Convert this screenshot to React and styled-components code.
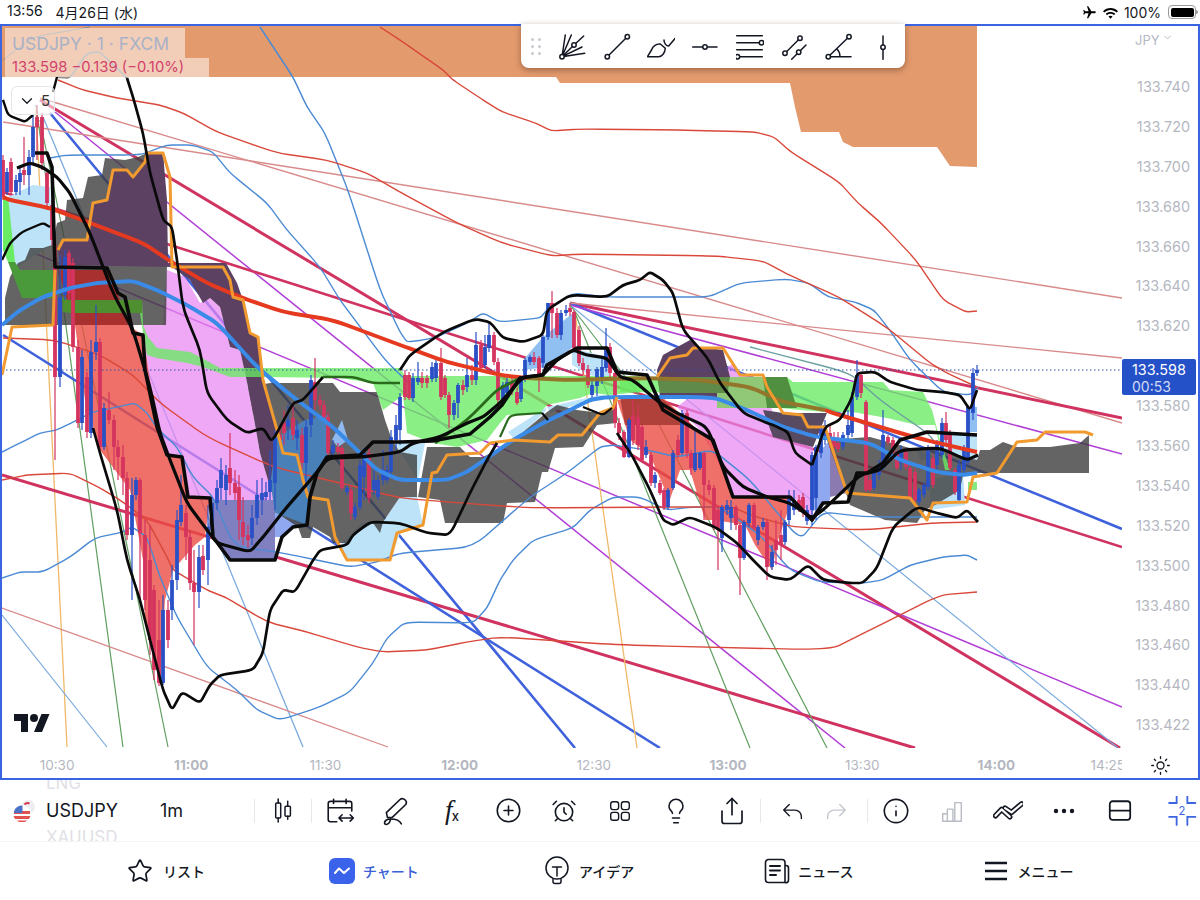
import React from "react";
import styled, { createGlobalStyle } from "styled-components";
import { Sun, CirclePlus, AlarmClock, Lightbulb, Share, Info, Star, ChevronDown } from "lucide-react";

const Global = createGlobalStyle`
  html, body { margin: 0; padding: 0; background: #fff; }
  body { font-family: Inter, "Noto Sans CJK JP", sans-serif; color: #131722; overflow: hidden; }
  * { box-sizing: border-box; }
`;

const Page = styled.div`
  width: 1200px; height: 900px; display: flex; flex-direction: column; background: #fff; overflow: hidden;
`;
const StatusBar = styled.div`
  height: 24px; flex: none; display: flex; align-items: center; justify-content: space-between; padding: 0 4px 0 7px;
  font-size: 14px; font-family: Inter, "Noto Sans CJK JP", sans-serif;
`;
const StatusLeft = styled.div`display: flex; gap: 13px; white-space: nowrap; font-weight: 400;`;
const StatusRight = styled.div`display: flex; align-items: center; gap: 5px; font-size: 14px;`;
const BatteryShell = styled.div`
  width: 28px; height: 14px; border: 1px solid #9a9a9a; border-radius: 4px; padding: 1.5px; margin-left: 2px; position: relative;
  &::after { content: ""; position: absolute; right: -3px; top: 4px; width: 2px; height: 4px; border-radius: 0 2px 2px 0; background: #9a9a9a; }
`;
const BatteryFill = styled.div`width: 100%; height: 100%; background: #000; border-radius: 2px;`;

const Frame = styled.div`
  position: relative; flex: none; height: 756px; border: 2px solid #3a64e0; display: grid;
  grid-template-columns: 1120px 1fr; grid-template-rows: 722px 1fr; background: #fff;
`;
const ChartSvg = styled.svg`display: block; width: 1120px; height: 722px;`;
const PriceAxis = styled.div`display: flex; flex-direction: column; font-size: 14.4px; color: #b4b7bf;`;
const AxisCurrency = styled.div`height: 41px; padding: 6px 0 0 13px; font-size: 13px; display: flex; align-items: flex-start; gap: 2px;`;
const PriceLabel = styled.div`
  flex: none; height: ${(p) => p.$h}px; line-height: 39.9px; text-align: right; padding-right: 8px;
`;
const TimeAxis = styled.div`
  display: flex; align-items: center; overflow: hidden; font-size: 13.5px; color: #b4b7bf; height: 30px; padding-top: 4px;
`;
const TimeCell = styled.div`
  flex: none; width: 134.2px; text-align: center; font-weight: ${(p) => (p.$major ? 700 : 400)};
  &:first-child { margin-left: -12px; }
`;
const TimeEnd = styled.div`flex: none; padding-left: 27px; white-space: nowrap;`;
const SunBox = styled.div`display: flex; align-items: center; justify-content: center; padding: 4px 0 0 1px;`;

const Legend = styled.div`
  position: absolute; left: 3px; top: 2px; display: flex; flex-direction: column; align-items: flex-start;
`;
const LegendTitle = styled.div`
  width: 180px; height: 30px; line-height: 31px; padding-left: 7px; background: rgba(255,255,255,.52);
  color: #a9b1c6; font-size: 17.5px; white-space: nowrap;
`;
const LegendValue = styled.div`
  width: 204px; height: 19px; line-height: 19px; padding-left: 7px; background: rgba(255,255,255,.52);
  color: #d2426b; font-size: 14.8px; white-space: nowrap;
`;
const Collapse = styled.div`
  margin: 9px 0 0 6px; width: 44px; height: 29px; border: 1px solid #e3e5ea; border-radius: 6px;
  background: rgba(255,255,255,.55); display: flex; align-items: center; gap: 5px; padding-left: 6px;
  font-size: 15px; color: #333;
`;
const Tools = styled.div`
  position: absolute; left: 519px; top: -2px; height: 44px; display: flex; align-items: center;
  background: #fff; border-radius: 0 0 8px 8px; box-shadow: 0 2px 6px rgba(70,40,20,.45);
`;
const Grip = styled.div`
  width: 29px; display: grid; grid-template-columns: 3px 3px; gap: 4px; justify-content: center;
  span { width: 3px; height: 3px; border-radius: 50%; background: #c8cbd3; }
`;
const ToolBtn = styled.div`width: 44.4px; height: 44px; display: flex; align-items: center; justify-content: center;`;
const Logo = styled.svg`position: absolute; left: 12px; top: 684px;`;
const PriceTag = styled.div`
  position: absolute; left: 1120px; top: 333px; width: 74px; height: 36px; background: #2450c8; border-radius: 2px;
  color: #fff; font-size: 14.4px; line-height: 17px; padding: 2px 0 0 10px;
`;
const TagTime = styled.div`color: rgba(255,255,255,.8); font-size: 14px;`;

const Toolbar = styled.div`height: 62px; flex: none; display: flex; align-items: center; position: relative; border-bottom: 1px solid #f3f4f6;`;
const SymbolArea = styled.div`width: 254px; height: 61px; flex: none; display: flex; align-items: center; padding-left: 12px; overflow: hidden;`;
const SymbolList = styled.div`
  width: 114px; margin-left: 10px; height: 61px; display: flex; flex-direction: column; justify-content: center; align-items: flex-start;
  font-size: 18px; line-height: 27px; overflow: hidden;
`;
const SymbolGhost = styled.div`color: #dfe1e6; font-size: 17px; flex: none;`;
const SymbolName = styled.div`color: #131722; flex: none;`;
const Interval = styled.div`font-size: 18px;`;
const Sep = styled.div`width: 1px; height: 24px; background: #e6e8ec; flex: none;`;
const IconBtn = styled.div`
  flex: none; width: ${(p) => p.$w || 56}px; height: 44px; display: flex; align-items: center; justify-content: center;
  color: ${(p) => p.$color || "#131722"};
`;
const Group = styled.div`display: flex; align-items: center; flex: none; padding: 0 ${(p) => p.$pad || 0}px;`;
const Fx = styled.div`
  font-family: "Liberation Serif", serif; font-style: italic; font-size: 27px; line-height: 1; display: flex; align-items: flex-end;
  sub { font-family: Inter, sans-serif; font-style: normal; font-size: 13px; font-weight: 500; line-height: 1; vertical-align: baseline; margin: 0 0 1px -1px; }
`;
const Nav = styled.div`flex: 1; display: flex; align-items: center; justify-content: flex-start; gap: 124px; padding: 0 0 1px 127px;`;
const Tab = styled.div`
  display: flex; align-items: center; gap: ${(p) => p.$gap || 8}px; font-size: 14px; font-weight: 500; white-space: nowrap;
  margin-left: ${(p) => p.$shift || 0}px;
  font-family: "Noto Sans CJK JP", sans-serif; color: ${(p) => (p.$active ? "#3a5fd9" : "#131722")};
`;

/* ---------- chart data (page coordinates) ---------- */
const RED = "#d0335f", BLUE = "#3f62dc", PURP = "#b13fd6", THINR = "#d98a8a", THINB = "#7aaade", GRN = "#5f9f5f", ORG = "#efb968";
const fans = [
  ["40,100 1120,748", RED, 3],
  ["50,113 575,748", BLUE, 2.6],
  ["43,117 303,747", THINB, 1.3],
  ["55,112 845,748", PURP, 1.5],
  ["40,98 1122,423", THINR, 1.4],
  ["3,122 1122,298", THINR, 1.4],
  ["36,105 123,747", GRN, 1.2],
  ["40,120 168,747", GRN, 1.2],
  ["36,110 67,747", ORG, 1.3],
  ["2,615 107,747", THINB, 1.2],
  ["2,608 388,747", THINR, 1.3],
  ["2,475 915,748", RED, 3],
  ["3,335 660,748", BLUE, 2.6],
  ["3,240 1122,707", PURP, 1.5],
  ["3,192 1122,547", RED, 2.6],
  ["570,303 1122,418", RED, 3],
  ["570,303 1122,529", BLUE, 2.6],
  ["570,305 1122,454", PURP, 1.5],
  ["570,303 1122,358", THINR, 1.3],
  ["570,305 1118,748", THINB, 1.2],
  ["575,313 637,748", ORG, 1.3],
  ["575,313 750,748", GRN, 1.2],
  ["570,305 653,413 827,748", GRN, 1.2],
];
const polys = [
  ["#bde3f8", "6,198 33,185 50,187 52,245 20,265 15,265"],
  ["#bde3f8", "340,545 362,523 383,522 400,497 417,497 423,525 400,533 390,560 347,560"],
  ["#bde3f8", "395,443 425,443 418,480 400,452"],
  ["#bde3f8", "508,432 547,407 545,412 515,440"],
  ["#bde3f8", "572,348 607,357 610,380 590,375 572,365"],
  ["#bde3f8", "547,407 587,398 600,395 610,396 550,412"],
  ["#bde3f8", "917,450 937,458 920,460"],
  ["#bde3f8", "943,433 977,433 977,460 945,450"],
  ["#bde3f8", "930,480 963,472 965,505 930,510"],
  ["#90c0f2", "968,407 977,407 977,432 968,432"],
  ["#90c0f2", "543,337 573,313 573,347 547,367 523,370 525,358"],
  ["rgba(232,134,241,.72)", "167,270 185,277 200,303 210,298 220,307 230,347 240,350 248,387 253,413 260,453 270,487 275,500 213,500 205,497 188,497 182,457 167,455 157,427 145,370 143,335 143,325 163,325 165,290"],
  ["rgba(232,134,241,.72)", "733,363 740,373 763,380 767,397 777,423 800,443 813,447 813,522 800,500 733,497 717,460 700,430 677,407"],
  ["rgba(234,76,66,.8)", "58,270 110,270 128,325 143,335 157,427 167,455 182,457 188,497 210,498 205,537 195,545 173,570 165,600 160,683 145,623 143,560 130,490 100,450 85,400 75,325"],
  ["rgba(234,76,66,.8)", "617,400 660,395 700,432 713,440 733,497 790,497 790,505 778,540 772,570 755,545 745,525 715,520 705,520 690,470 680,470 668,505 665,490 650,455 630,440"],
  ["#8080c0", "213,500 275,500 275,560 230,560 220,547 208,527"],
  ["#8fa8f0", "275,513 307,525 293,527 282,537 275,537"],
  ["#8fa8f0", "812,460 830,440 830,500 812,512"],
  ["#8a7ab0", "830,445 847,493 830,497"],
  ["rgba(61,61,61,.8)", "5,298 10,277 18,263 25,260 30,248 43,248 52,245 57,223 65,220 67,200 83,198 88,177 102,175 105,158 125,160 138,157 147,153 163,153 168,262 167,263 166,325 5,325"],
  ["rgba(61,61,61,.8)", "270,383 333,383 340,392 377,392 385,420 392,440 400,452 417,455 417,497 400,497 383,522 380,533 373,523 353,535 347,543 333,543 330,537 313,527 310,538 302,538 298,527 277,513 270,480 267,447 253,413 248,387"],
  ["rgba(61,61,61,.8)", "418,497 427,447 460,447 470,457 483,457 510,443 547,412 557,405 577,410 600,413 617,408 617,423 597,425 583,447 555,448 548,472 542,472 535,502 507,503 503,523 445,523 440,500"],
  ["rgba(61,61,61,.8)", "827,440 870,437 917,450 940,450 977,460 980,450 990,450 1003,442 1017,447 1050,447 1080,443 1089,435 1089,473 977,473 963,475 960,490 935,505 925,510 917,523 885,520 850,505 845,490"],
  ["#4a80b8", "272,440 305,420 328,415 328,457 310,480 307,525 287,517 275,513 270,480"],
  ["#8fb8ee", "342,420 332,440 338,447 348,440"],
  ["#5c4163", "58,250 63,240 87,240 93,203 107,200 113,170 127,170 133,177 145,162 147,153 163,153 167,200 168,263 226,263 237,283 243,300 250,333 258,337 263,380 277,430 270,487 260,453 253,413 248,387 240,350 230,347 220,307 210,298 203,303 190,280 172,267 60,265"],
  ["#5c4163", "657,370 663,355 690,340 700,347 723,350 730,377 728,393 720,397 660,397"],
  ["#584a60", "763,410 773,437 813,447 827,413 783,413"],
  ["#a8302e", "58,270 110,270 128,325 75,325"],
  ["#b0403a", "620,397 660,397 700,432 690,425 660,425 625,425"],
  ["#69eb63", "3,197 8,197 15,262 8,262 3,250"],
  ["#4a9a3c", "15,262 20,270 53,270 53,298 22,298 15,280 8,262"],
  ["rgba(105,235,99,.78)", "142,300 143,325 148,337 157,348 190,352 200,357 220,368 400,368 405,376 640,376 640,392 610,395 593,393 580,398 547,405 540,413 507,415 500,423 487,440 457,447 433,443 407,433 403,395 383,410 373,383 340,378 262,377 230,377 203,367 187,363 157,358 147,355 143,333 140,313"],
  ["rgba(105,235,99,.78)", "620,377 787,377 793,382 883,382 890,390 923,392 932,410 940,440 950,470 945,470 935,425 917,425 887,418 853,412 827,412 800,410 780,408 717,408 717,393 620,392"],
  ["#4e8f2f", "62,297 68,300 142,300 142,313 70,313 63,312"],
  ["#5f8a4a", "657,377 730,377 728,393 660,393"],
  ["#90c878", "730,377 763,377 767,408 717,408 717,393 728,393"],
  ["#4f8f3f", "763,377 787,377 797,408 767,408"],
  ["#86e97f", "968,482 977,482 977,490 968,490"],
];
const B1 = "#4a8ad4", R1 = "#d9483b";
const bands = [
  ["260,27 293,77 307,107 325,133 348,190 380,290 400,332 407,342 423,340 437,337 467,323 483,313 500,322 540,318 547,310 573,293 607,297 667,297 709,297 740,283 786,279 809,283 828,297 855,302 874,310 889,329 910,360 943,392 970,395 978,387", B1],
  ["50,158 67,155 140,155 167,145 193,145 213,152 230,173 267,203 287,230 320,267 340,300 355,320 385,360 413,387", B1],
  ["2,452 20,443 40,433 57,430 73,422 93,412 113,408 135,403 147,413 157,428 177,447 193,477 213,497 230,537 240,547 277,552 307,558 350,567 377,562 400,553 473,547 530,497 567,473 600,447 613,445 647,450 677,457 713,450 750,480 800,540 823,512 867,517 977,517", B1],
  ["2,578 20,572 43,572 70,557 95,538 123,532 132,527 147,537 160,577 177,617 207,667 237,690 257,710 280,720 320,707 350,692 373,663 387,638 405,622 473,623 487,608 500,580 513,560 533,540 573,528 590,510 613,497 640,497 667,510 693,507 720,507 760,535 790,570 820,582 863,583 883,580 910,565 943,557 967,555 977,560", B1],
  ["750,347 850,373 880,400 930,435 942,455", "#6aa0a0"],
  ["380,27 400,40 443,70 453,80 480,98 502,112 533,122 552,131 579,129 678,130 755,132 774,137 791,152 839,182 858,203 881,223 916,260 943,300 966,312 977,311", R1],
  ["58,80 83,90 117,98 160,105 183,113 217,132 277,153 327,160 367,173 400,192 457,223 502,243 552,256 579,254 717,256 763,261 789,275 839,297 889,329 930,363 947,373 977,387", R1],
  ["3,338 55,340 100,355 133,375 160,403 207,437 273,467 340,483 400,498 460,503 533,508 667,507 733,507 750,515 793,527 867,530 933,523 977,522", R1],
  ["2,480 27,475 70,473 100,488 120,500 147,520 167,557 173,570 207,590 227,598 267,622 307,632 357,647 383,652 427,650 467,642 500,637 620,645 830,650 870,630 940,595 977,592", R1],
];
const U = "u", D = "d";
const candles = [
[3,160,197,D,155,200],[7,172,192,U,168,195],[11,162,192,D,158,195],[16,180,192,U,175,195],[20,173,182,U,168,195],[24,170,175,D,137,185],[29,157,175,U,150,195],[33,127,157,U,115,165],[37,117,127,D,105,160],[42,117,163,D,113,170],[47,173,203,D,170,210],[52,205,240,D,200,245],
[55,245,377,D,240,460],[60,297,377,U,255,387],[65,257,295,U,250,300],[69,253,293,D,250,300],[73,263,347,D,258,352],[78,347,423,D,340,428],[82,357,423,U,350,430],[87,377,432,D,372,438],[91,352,433,U,340,438],[96,342,352,U,305,360],[100,342,447,D,338,450],[104,408,447,U,403,450],[109,410,420,D,392,424],[114,420,447,D,415,470],[118,447,457,D,440,480],[123,457,478,D,445,495],[127,478,535,D,472,540],[132,495,535,U,478,600],[136,480,495,U,477,500],[140,480,533,D,478,600],[145,535,600,D,520,610],[150,560,640,D,525,655],[154,590,670,D,585,680],[159,640,683,D,600,686],[163,610,683,U,595,685],[168,610,640,D,600,648],[172,580,610,U,565,620],[177,520,580,U,510,590],[181,505,522,U,475,526],[186,513,537,D,505,560],[190,537,583,D,530,590],[194,583,592,D,550,645],[199,557,592,U,545,608],[203,556,570,D,545,575],[208,527,560,U,505,585],[212,503,527,U,497,530],[217,488,503,U,480,510],[221,470,488,U,458,500],[226,475,490,U,465,505],[230,468,483,D,433,495],[235,483,493,D,470,500],[239,487,520,D,475,540],[243,522,537,D,497,545],[248,535,540,D,525,548],[252,518,538,U,505,545],[257,495,518,U,480,525],[262,493,500,U,478,515],[266,492,497,U,482,500],[270,480,492,U,450,500],[275,438,483,U,430,510],[280,435,440,D,428,445],[284,423,433,D,410,445],[288,420,427,U,405,440],[293,418,435,D,405,440],[297,430,438,U,420,450],[302,435,463,D,428,470],[306,427,463,U,420,485],[311,380,425,U,375,437],[315,382,400,D,358,410],[320,400,405,D,395,410],[324,405,417,D,400,420],[328,417,453,D,412,458],[333,445,453,U,440,458],[338,447,452,D,443,455],[342,448,488,D,445,490],[347,488,492,U,485,495],[351,490,513,D,485,520],[355,507,517,U,503,520],[360,465,507,U,460,510],[364,453,477,U,448,500],[369,453,498,D,448,503],[374,480,490,U,470,495],[378,480,497,U,475,500],[383,470,480,U,450,485],[387,470,480,U,465,483],[391,437,472,U,430,477],[396,425,440,U,415,450],
[400,397,430,U,393,445],[405,375,397,D,370,400],[409,375,398,D,372,400],[413,378,398,U,373,402],[418,378,382,U,362,385],[422,378,383,D,372,388],[427,378,383,D,375,388],[432,367,379,U,362,382],[436,363,378,U,360,382],[441,363,397,D,348,400],[445,378,395,D,375,398],[449,395,415,D,392,428],[454,403,415,U,400,420],[458,385,403,U,383,418],[463,385,390,D,380,395],[467,375,387,U,358,392],[472,375,380,D,365,385],[476,345,380,U,332,385],[481,345,368,D,340,372],[485,347,365,U,335,368],[489,335,348,U,322,352],[494,335,362,D,332,365],[498,362,400,D,358,405],[503,385,400,U,382,405],[507,382,393,U,378,398],[512,383,390,D,378,395],[517,392,403,D,388,405],[521,378,399,U,376,402],[525,360,378,U,358,382],[530,357,362,U,355,365],[534,357,362,D,352,365],[539,358,380,D,356,392],[543,337,363,U,335,368],[548,303,337,U,303,340],[552,303,313,D,291,338],[557,313,335,D,308,338],[561,313,335,U,310,340],[566,310,313,U,305,316],[570,308,312,D,303,316],[574,312,348,D,310,350],[579,330,363,D,326,366],[583,363,370,D,358,375],[588,369,385,D,365,388],[592,385,395,U,380,400],[597,369,386,U,367,396],[602,367,380,U,358,384],[606,347,368,U,328,372],[610,347,373,D,343,378],[615,373,423,D,370,428],[619,423,433,D,418,440],[624,432,457,D,430,458],[629,420,457,U,418,458],[633,415,440,D,400,445],[638,417,445,D,405,450],[642,427,460,D,425,462],[646,447,455,U,440,458],[651,455,483,D,452,486],[655,475,483,U,472,488],[660,483,493,D,480,495],[664,490,507,D,488,510],[668,490,507,U,488,510],[673,453,488,U,450,490],[678,440,455,D,435,458],[682,413,453,U,410,455],[687,413,453,D,410,458],[691,453,468,D,450,475],[695,453,470,U,430,472],[700,453,468,U,452,470],[704,453,485,D,452,520],[709,485,490,D,480,495],[714,488,528,D,485,530],[718,510,530,D,505,570],[722,507,538,U,505,552],[727,505,510,U,500,515],[731,507,518,U,500,530],[736,507,525,D,505,530],[740,525,558,D,523,595],[744,522,558,U,520,560],[749,505,523,U,503,527],[754,505,528,D,503,530],[758,527,540,U,525,545],[763,522,527,U,518,530],[767,522,567,D,520,580],[772,552,567,U,545,570],[776,540,550,D,520,565],[781,535,545,D,510,560],[785,522,542,U,520,545],[789,497,520,U,490,525],[794,500,510,U,490,515],[799,500,507,D,495,512],[803,497,512,D,493,517],[807,510,521,U,505,525],[812,455,510,U,452,525],[816,447,498,U,445,520],[821,427,453,U,425,458],[825,425,440,U,420,445],[830,433,442,D,425,448],[834,437,447,D,432,452],[838,443,449,D,432,452],[843,435,447,U,432,450],[848,425,435,U,410,440],[852,397,433,U,392,437],[857,375,397,U,360,400],[861,375,393,D,372,398],[866,402,490,D,400,492],[870,480,490,D,475,492],[874,472,488,U,468,490],[879,465,475,U,460,480],[883,435,468,U,410,470],[888,437,442,D,435,445],[893,440,452,D,437,455],[897,452,468,D,450,470],[901,450,463,U,445,470],[906,452,467,D,448,470],[910,468,498,D,465,500],[915,472,500,D,468,503],[919,490,502,U,488,505],[924,485,495,U,482,498],[928,448,487,U,445,490],[933,458,485,D,455,488],[937,445,465,U,440,470],[942,423,455,U,418,458],[946,423,440,D,412,445],[950,433,468,D,430,470],[955,470,492,D,468,495],[959,465,500,U,460,502],[964,450,470,U,445,475],[968,407,462,U,405,465],[973,373,413,U,368,420],[977,370,373,U,365,376],
];
const curves = [
  ["812,465 825,427 840,420 852,398 857,373 875,372 890,382 917,390 943,392 960,395 970,410 977,390", "#0a0a0a", 2.7],
  ["57,77 70,78 87,53 100,52 127,78", "#8f8f8f", 1.8],
  ["53,92 57,77", "#0a0a0a", 2.4],
  ["127,78 133,97 143,133 150,173 163,220 172,227 177,260 182,300 185,313 200,350 207,393 227,420 247,433 263,428 272,442 293,403 303,400 323,377", "#0a0a0a", 2.7],
  ["323,377 353,377 373,383 400,383", "#2a6a1c", 2.6],
  ["400,370 410,355 443,332 475,319 490,322 503,338 523,342 543,335 547,310 570,295 607,297 623,285 640,280 650,272 663,280 673,293 683,330 707,357 720,383 743,413 767,423 773,425 788,432 795,453 812,465", "#0a0a0a", 2.7],
  ["3,100 8,115 25,122 33,115", "#0a0a0a", 2.4],
  ["2,260 10,243 22,232 43,223 50,227", "#0a0a0a", 2.4],
  ["3,60 33,37 90,27", "#888", 1],
  ["93,428 100,453 117,510 127,560 140,600 150,640 163,690 172,710 182,692 200,703 210,685 220,675 253,670 263,653 270,610 283,590 295,592 312,562 320,550 347,545 353,535 370,522 400,523 427,533 450,535 470,493 487,460 497,443", "#0a0a0a", 2.7],
  ["500,437 510,415 542,413", "#2a6a1c", 2.2],
  ["542,413 548,420", "#0a0a0a", 2.2],
  ["583,407 603,415 612,408", "#0a0a0a", 2.2],
  ["435,443 467,420 497,390 520,378", "#2a6a1c", 2.8],
  ["617,433 633,457 650,490 663,520 673,525 690,517 717,528 737,543 753,560 770,577 790,580 808,565 823,580 850,583 863,583 877,568 893,527 917,507 937,513 957,518 967,510 978,522", "#0a0a0a", 2.7],
  ["17,168 30,163 42,167 57,177 70,193 90,233 113,293 133,330 150,387 160,433 170,460 187,503 207,530 217,543 250,552 263,537 287,507 313,477 328,458 363,457 400,452 413,443 440,437 467,423 483,417 500,403 523,377 543,375 557,360 573,350 587,355 607,358 620,377 633,380 660,403 677,413 707,427 723,467 743,487 767,497 790,503 812,518 823,510 860,475 880,470 900,450 940,448 967,460 978,455", "#0a0a0a", 3.2],
];
const stairBlack = "35,153 47,153 52,167 55,267 107,268 118,293 125,297 133,333 143,335 145,370 157,427 167,455 182,457 188,497 210,498 213,537 230,560 275,560 282,537 293,527 307,525 310,497 317,473 327,457 360,455 373,442 400,442 432,441 470,434 490,417 502,405 520,378 543,375 547,365 577,348 607,348 617,372 647,375 663,410 713,440 733,497 790,497 812,520 823,503 848,502 857,473 867,473 883,463 900,440 927,432 977,435";
const orange = [
  "2,375 12,327 53,325 55,270",
  "58,250 63,240 87,240 93,203 107,200 113,170 127,170 133,177 145,162 147,153 163,153 170,177 172,267 223,267 230,280 233,297 243,300 250,333 258,337 263,380 277,430 283,453 297,455 303,480 308,497 328,500 335,537 340,547 347,560 390,560 397,533 423,525 432,473 437,472 447,455 480,453 490,443 513,440 550,442 558,435 582,435 600,413 613,408 617,397",
  "657,377 670,358 687,355 693,348 723,348 740,375 763,375 767,387 783,413 802,415 808,427 825,427 847,493 910,498 927,520 933,503 967,502 973,477 997,473 1017,442 1037,440 1045,432 1085,432 1093,435",
];
const emaRed = ["3,197 10,200 50,208 90,223 143,243 173,263 207,283 240,297 283,312 333,320 400,345 447,362 500,375 527,378", "825,410 833,413 917,438 977,452"];
const emaBrown = "527,378 567,380 647,378 700,380 750,387 783,402 825,410";
const emaBlue = "2,325 20,310 43,297 70,288 97,283 133,281 157,290 187,305 217,323 257,367 293,397 333,427 360,453 377,470 400,480 447,480 467,472 487,458 513,440 543,423 570,410 590,400 607,397 713,397 747,410 783,427 817,437 870,443 900,460 937,472 963,475 977,473";

// softens only the corners of a hand-read polyline, so it stays close to its points
const soften = (str) => {
  const p = str.trim().split(/\s+/).map((s) => s.split(",").map(Number));
  let d = `M${p[0][0]} ${p[0][1]}`;
  const mix = (a, b, t) => [a[0] + (b[0] - a[0]) * t, a[1] + (b[1] - a[1]) * t];
  for (let i = 1; i < p.length - 1; i++) {
    const a = mix(p[i], p[i - 1], 0.22), b = mix(p[i], p[i + 1], 0.22);
    d += `L${a[0]} ${a[1]}Q${p[i][0]} ${p[i][1]} ${b[0]} ${b[1]}`;
  }
  const e = p[p.length - 1];
  return `${d}L${e[0]} ${e[1]}`;
};

function Chart() {
  return (
    <ChartSvg viewBox="2 26 1120 722">
      <polygon fill="#e39a6d" points="2,26 977,26 977,167 950,166 937,147 853,147 843,142 839,132 801,132 795,107 790,83 560,83 556,77 2,77" />
      {fans.map(([p, c, w], i) => <polyline key={i} points={p} fill="none" stroke={c} strokeWidth={w} />)}
      {polys.map(([c, p], i) => <polygon key={i} points={p} fill={c} />)}
      {bands.map(([p, c], i) => <path key={i} d={soften(p)} fill="none" stroke={c} strokeWidth="1.4" />)}
      <line x1="2" y1="370" x2="1122" y2="370" stroke="#2f4fa8" strokeWidth="1" strokeDasharray="1.5 2.5" />
      {candles.map(([x, t, b, k, wt, wb], i) => {
        const c = k === U ? "#2a50c6" : "#d5345f";
        return (
          <g key={i} fill={c}>
            <rect x={x - 0.6} y={wt} width="1.2" height={wb - wt} />
            <rect x={x - 1.9} y={t} width="3.8" height={b - t} />
          </g>
        );
      })}
      {emaRed.map((p, i) => <path key={i} d={soften(p)} fill="none" stroke="#e53a20" strokeWidth="4" />)}
      <path d={soften(emaBrown)} fill="none" stroke="#93762c" strokeWidth="4" />
      <path d={soften(emaBlue)} fill="none" stroke="#3a8ae8" strokeWidth="4" />
      {orange.map((p, i) => <polyline key={i} points={p} fill="none" stroke="#f09a30" strokeWidth="3" strokeLinejoin="round" />)}
      {curves.map(([p, c, w], i) => <path key={i} d={soften(p)} fill="none" stroke={c} strokeWidth={w} strokeLinejoin="round" />)}
      <polyline points={stairBlack} fill="none" stroke="#0a0a0a" strokeWidth="3.6" strokeLinejoin="round" />
    </ChartSvg>
  );
}

/* ---------- small drawing-tool icons ---------- */
const Ico = ({ s = 28, children, color = "#131722", w = 1.5 }) => (
  <svg width={s} height={s} viewBox="0 0 28 28" fill="none" stroke={color} strokeWidth={w} strokeLinecap="round" strokeLinejoin="round">{children}</svg>
);
const Dot = ({ x, y }) => <circle cx={x} cy={y} r="2.2" fill="#fff" />;
const toolIcons = [
  <Ico key="fan"><path d="M4 24.7 7.3 3M4 24.7 13.3 3M4 24.7 16 13M16 13 25.7 4M4 24.7 26.7 21.3M4 24.7 24 15" /><Dot x={4} y={24.7} /><Dot x={16} y={13} /></Ico>,
  <Ico key="line"><path d="M4.3 24.7 24.3 4.7" /><Dot x={4.3} y={24.7} /><Dot x={24.3} y={4.7} /></Ico>,
  <Ico key="brush"><path d="M0.5 24.7H11.7C15 24.7 18 21 18.3 16.3L13.3 12C9 11.8 6 14 4.5 18ZM17 8C17 11 19 14 21.7 14L28 6.5" /></Ico>,
  <Ico key="ray"><path d="M1.7 15H26" /><Dot x={14} y={15} /></Ico>,
  <Ico key="lines"><path d="M.7 3.7H26.3M.7 10.7H23.5M.7 17.7H26.3M3 24.7H26.3" /><Dot x={25.5} y={10.7} /><Dot x={1.5} y={24.7} /></Ico>,
  <Ico key="para"><path d="M5 21.3 20 6.3M11.7 27.3 26 13" /><Dot x={5} y={21.3} /><Dot x={20} y={6.3} /><Dot x={18.7} y={20.3} /></Ico>,
  <Ico key="angle"><path d="M3.3 24.7 24 4.7M3.3 24.7H26M12 17C14 19 15 22 15 24.7" /><Dot x={3.3} y={24.7} /><Dot x={24} y={4.7} /></Ico>,
  <Ico key="vert"><path d="M14 4V27.3" /><Dot x={14} y={15.3} /></Ico>,
];

const Airplane = () => (
  <svg width="15" height="15" viewBox="0 0 24 24" fill="#000" style={{ transform: "rotate(90deg)" }}><path d="M21 16v-2l-8-5V3.5c0-.83-.67-1.5-1.5-1.5S10 2.67 10 3.5V9l-8 5v2l8-2.5V19l-2 1.5V22l3.5-1 3.5 1v-1.5L13 19v-5.5l8 2.5z" /></svg>
);
const Wifi = () => (
  <svg width="17" height="15" viewBox="0 0 24 22" fill="#000"><path d="M1 9l2 2c4.97-4.97 13.03-4.97 18 0l2-2C16.93 2.93 7.08 2.93 1 9zm8 8l3 3 3-3c-1.65-1.66-4.34-1.66-6 0zm-4-4l2 2c2.76-2.76 7.24-2.76 10 0l2-2C15.14 9.14 8.87 9.14 5 13z" /></svg>
);
const Flag = () => (
  <svg width="24" height="26" viewBox="0 0 24 26">
    <circle cx="16" cy="9" r="7" fill="#eceef2" />
    <path d="M12.5 6.5a4.5 4.5 0 0 1 5-1" stroke="#d9324a" strokeWidth="2" fill="none" />
    <circle cx="10" cy="16" r="9" fill="#fff" />
    <path d="M2 13h16v3H2zM1.5 18h17l-1.5 3H3zM5 22.5h10l-2 1.5H7z" fill="#e2534f" />
    <path d="M2.5 12A8.5 8.5 0 0 1 10.5 7.5V15H2z" fill="#4a72c8" />
  </svg>
);

const prices = ["133.740","133.720","133.700","133.680","133.660","133.640","133.620","","133.580","133.560","133.540","133.520","133.500","133.480","133.460","133.440"];

export default function App() {
  return (
    <Page>
      <Global />
      <StatusBar>
        <StatusLeft><span>13:56</span><span>4月26日 (水)</span></StatusLeft>
        <StatusRight>
          <Airplane /><Wifi /><span>100%</span>
          <BatteryShell><BatteryFill /></BatteryShell>
        </StatusRight>
      </StatusBar>

      <Frame>
        <Chart />
        <PriceAxis>
          <AxisCurrency>JPY <ChevronDown size={11} strokeWidth={2} /></AxisCurrency>
          {prices.map((p, i) => <PriceLabel key={i} $h={39.9}>{p}</PriceLabel>)}
          <PriceLabel $h={32}>133.422</PriceLabel>
        </PriceAxis>
        <TimeAxis>
          <TimeCell>10:30</TimeCell>
          <TimeCell $major>11:00</TimeCell>
          <TimeCell>11:30</TimeCell>
          <TimeCell $major>12:00</TimeCell>
          <TimeCell>12:30</TimeCell>
          <TimeCell $major>13:00</TimeCell>
          <TimeCell>13:30</TimeCell>
          <TimeCell $major>14:00</TimeCell>
          <TimeEnd>14:25</TimeEnd>
        </TimeAxis>
        <SunBox><Sun size={21} strokeWidth={1.5} color="#131722" /></SunBox>

        <Legend>
          <LegendTitle>USDJPY · 1 · FXCM</LegendTitle>
          <LegendValue>133.598 −0.139 (−0.10%)</LegendValue>
          <Collapse><ChevronDown size={18} strokeWidth={1.6} color="#131722" />5</Collapse>
        </Legend>
        <Tools>
          <Grip>{[0,1,2,3,4,5].map((i) => <span key={i} />)}</Grip>
          {toolIcons.map((ic, i) => <ToolBtn key={i}>{ic}</ToolBtn>)}
        </Tools>
        <Logo width="36" height="28" viewBox="0 0 36 28" fill="#131722">
          <path d="M14 22H7V11H0V4h14v18zM28 22h-8l7.5-18h8L28 22z" />
          <circle cx="20" cy="8" r="4" />
        </Logo>
        <PriceTag>133.598<TagTime>00:53</TagTime></PriceTag>
      </Frame>

      <Toolbar>
        <SymbolArea>
          <Flag />
          <SymbolList>
            <SymbolGhost>LNG</SymbolGhost>
            <SymbolName>USDJPY</SymbolName>
            <SymbolGhost>XAUUSD</SymbolGhost>
          </SymbolList>
          <Interval>1m</Interval>
        </SymbolArea>
        <Sep />
        <IconBtn $w={56}>
          <Ico><path d="M9.2 2V6M9.2 21V25M18.7 4.3V9.3M18.7 19.3V22.3" /><rect x="6.7" y="6" width="5" height="15" rx="1" /><rect x="16" y="9.3" width="5.4" height="10" rx="1" /></Ico>
        </IconBtn>
        <Sep />
        <Group>
          <IconBtn>
            <Ico s={30}><path d="M11 24H5a2 2 0 0 1-2-2V7a2 2 0 0 1 2-2H23a2 2 0 0 1 2 2v7M3 11H25M8 3V7M19.7 3V7M13 20.5H26.5M16 17.5l-3 3 3 3M23.5 17.5l3 3-3 3" /></Ico>
          </IconBtn>
          <IconBtn>
            <Ico s={30}><path d="M6 20 5 15.5 17.5 3.5C19 2 21 2.2 22.6 3.7 24 5.2 24 7 22.6 8.4L10.5 20 6 20ZM3.5 26C2.5 23 6 21.5 9 21.5 13 21.5 17 22 19 26M3.5 26C5 27.2 8 26.5 9 21.5" /></Ico>
          </IconBtn>
          <IconBtn><Fx>f<sub>x</sub></Fx></IconBtn>
          <IconBtn><CirclePlus size={27} strokeWidth={1.4} /></IconBtn>
          <IconBtn><AlarmClock size={26} strokeWidth={1.5} /></IconBtn>
          <IconBtn>
            <Ico s={26}><rect x="4" y="4" width="8.5" height="8.5" rx="2.5" /><rect x="15.5" y="4" width="8.5" height="8.5" rx="2.5" /><rect x="4" y="15.5" width="8.5" height="8.5" rx="2.5" /><rect x="15.5" y="15.5" width="8.5" height="8.5" rx="2.5" /></Ico>
          </IconBtn>
          <IconBtn><Lightbulb size={28} strokeWidth={1.35} /></IconBtn>
          <IconBtn><Share size={30} strokeWidth={1.35} /></IconBtn>
        </Group>
        <Sep />
        <Group $pad={10}>
          <IconBtn $w={43}><Ico s={26}><path d="M10 7 4 13l6 6M4 13h12c4 0 7 3 7 7v2" /></Ico></IconBtn>
          <IconBtn $w={43}><Ico s={26} color="#c4c7cf"><path d="M18 7l6 6-6 6M24 13H12c-4 0-7 3-7 7v2" /></Ico></IconBtn>
        </Group>
        <Sep />
        <Group>
          <IconBtn><Info size={28} strokeWidth={1.4} /></IconBtn>
          <IconBtn>
            <Ico s={26} color="#b9bcc4"><path d="M4 25V17H9V25ZM9 25V12H15V25ZM17 25V5H24V25ZM4 25H24" /></Ico>
          </IconBtn>
          <IconBtn>
            <svg width="30" height="30" viewBox="0 0 28 28" fill="none" strokeLinejoin="round" strokeLinecap="round">
              <path d="M2.3 18.5 8 12.5 15.7 19.5" stroke="#131722" strokeWidth="5" />
              <path d="M11.3 11.3 17.3 15.3 26.7 7.3" stroke="#131722" strokeWidth="5" />
              <path d="M2.3 18.5 8 12.5 15.7 19.5" stroke="#fff" strokeWidth="2" />
              <path d="M11.3 11.3 17.3 15.3 26.7 7.3" stroke="#fff" strokeWidth="2" />
            </svg>
          </IconBtn>
          <IconBtn>
            <svg width="24" height="6" viewBox="0 0 24 6" fill="#131722"><circle cx="4" cy="3" r="2.2" /><circle cx="12" cy="3" r="2.2" /><circle cx="20" cy="3" r="2.2" /></svg>
          </IconBtn>
          <IconBtn><Ico s={26} w={1.9}><rect x="3" y="3.5" width="22" height="20" rx="3" /><path d="M3 13.5H25" /></Ico></IconBtn>
          <IconBtn $w={68}>
            <svg width="30" height="30" viewBox="0 0 28 28" fill="none" stroke="#3d65e0" strokeWidth="1.7" strokeLinecap="round">
              <path d="M2 6.5H9V0.5M19 0.5V6.5H26.5M2 19.5H9V27M26.5 19.5H19V27" />
              <text x="14" y="17.5" textAnchor="middle" fontSize="10.5" fill="#3d65e0" stroke="none" fontFamily="Inter, sans-serif">2</text>
            </svg>
          </IconBtn>
        </Group>
      </Toolbar>

      <Nav>
        <Tab $gap={10}><Star size={26} strokeWidth={1.6} />リスト</Tab>
        <Tab $active>
          <svg width="26" height="26" viewBox="0 0 26 26"><rect width="26" height="26" rx="6" fill="#3a62ea" /><path d="M6 15 10 10.5 15 15 20 10.5" fill="none" stroke="#fff" strokeWidth="2" strokeLinecap="round" strokeLinejoin="round" /></svg>
          チャート
        </Tab>
        <Tab $gap={10} $shift={2}>
          <svg width="24" height="30" viewBox="0 0 24 30" fill="none" stroke="#131722" strokeWidth="1.5" strokeLinecap="round"><circle cx="12" cy="12" r="11" /><path d="M7.5 11H16.5M12 11V20" /><path d="M8 23V25.5C8 26.5 8.5 27.5 10 27.5H14C15.5 27.5 16 26.5 16 25.5V23" /></svg>
          アイデア
        </Tab>
        <Tab $shift={6}>
          <svg width="26" height="26" viewBox="0 0 26 26" fill="none" stroke="#131722" strokeWidth="1.6" strokeLinecap="round" strokeLinejoin="round"><path d="M1.5 4.5a3 3 0 0 1 3-3H18a3 3 0 0 1 3 3V24.5H4.5a3 3 0 0 1-3-3ZM21 7.5H22a2.5 2.5 0 0 1 2.5 2.5V22A2.5 2.5 0 0 1 21 24.5" /><path d="M6 8H16M6 12.5H16M6 17H12" strokeWidth="2" /></svg>
          ニュース
        </Tab>
        <Tab $gap={10} $shift={6}>
          <svg width="24" height="20" viewBox="0 0 24 20" stroke="#131722" strokeWidth="2.4"><path d="M1 2H23M1 10H23M1 18H23" /></svg>
          メニュー
        </Tab>
      </Nav>
    </Page>
  );
}
